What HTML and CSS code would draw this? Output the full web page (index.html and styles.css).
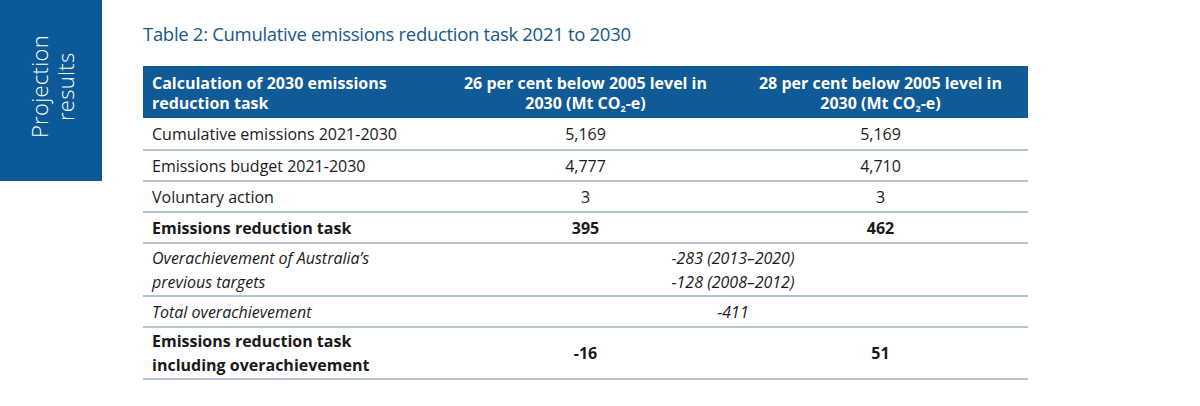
FILE: index.html
```html
<!DOCTYPE html>
<html>
<head>
<meta charset="utf-8">
<link rel="stylesheet" href="styles.css">
</head>
<body>
<div class="page">
  <aside class="tab"><div class="tab-text">Projection<br>results</div></aside>
  <main class="content">
    <h1 class="title">Table 2: Cumulative emissions reduction task 2021 to 2030</h1>
    <table class="data">
      <colgroup><col class="c1"><col class="c2"><col class="c3"></colgroup>
      <thead>
        <tr>
          <th class="first">Calculation of 2030 emissions<br>reduction task</th>
          <th>26 per cent below 2005 level in<br>2030 (Mt CO<sub>2</sub>-e)</th>
          <th>28 per cent below 2005 level in<br>2030 (Mt CO<sub>2</sub>-e)</th>
        </tr>
      </thead>
      <tbody>
        <tr><td>Cumulative emissions 2021-2030</td><td class="num">5,169</td><td class="num">5,169</td></tr>
        <tr><td>Emissions budget 2021-2030</td><td class="num">4,777</td><td class="num">4,710</td></tr>
        <tr><td>Voluntary action</td><td class="num">3</td><td class="num">3</td></tr>
        <tr class="bold"><td>Emissions reduction task</td><td class="num">395</td><td class="num">462</td></tr>
        <tr class="ital tall"><td>Overachievement of Australia’s<br>previous targets</td><td class="num" colspan="2">-283 (2013–2020)<br>-128 (2008–2012)</td></tr>
        <tr class="ital"><td>Total overachievement</td><td class="num" colspan="2">-411</td></tr>
        <tr class="bold tall"><td>Emissions reduction task<br>including overachievement</td><td class="num">-16</td><td class="num">51</td></tr>
      </tbody>
    </table>
  </main>
</div>
</body>
</html>
```

FILE: styles.css
```css
* { box-sizing: border-box; }
html, body { margin: 0; padding: 0; background: #fff; }
body { font-family: "Open Sans", "Noto Sans", sans-serif; color: #1a1a1a; }
.page { display: flex; align-items: flex-start; width: 1200px; height: 406px; }
.tab {
  width: 102px; height: 181px; background: #0b5996;
  display: flex; align-items: center; justify-content: center;
  padding-bottom: 8px; padding-left: 2px;
}
.tab-text {
  writing-mode: vertical-rl; transform: rotate(180deg);
  color: #fff; font-weight: 300; font-size: 22px; line-height: 26px;
  text-align: center; letter-spacing: 0.3px;
}
.content { padding-left: 41px; padding-top: 21px; }
.title {
  margin: 0; font-weight: 400; font-size: 18.5px; line-height: 26px;
  color: #16588c; letter-spacing: -0.3px;
}
.data {
  margin-top: 19px; width: 885px; border-collapse: collapse; table-layout: fixed;
  font-size: 16px; letter-spacing: 0;
}
.data col.c1, .data col.c2, .data col.c3 { width: 295px; }
.data th {
  background: #0f5a97; color: #fff; font-weight: 700; font-size: 16px;
  line-height: 20px; height: 52px; padding: 4px 9px 2px; text-align: center;
  vertical-align: middle;
}
.data th.first { text-align: left; }
.data sub { font-size: 9px; vertical-align: -3px; line-height: 0; }
.data td {
  border-bottom: 2px solid #b5c3d0; height: 31px; padding: 0 9px;
  line-height: 22px; vertical-align: middle;
}
.data tbody tr:first-child td { height: 32px; }
.data tr.tall td { height: 52px; line-height: 24px; }
.data tr.tall.ital td { height: 53px; }
.data td.num { text-align: center; }
.bold td { font-weight: 700; }
.ital td { font-style: italic; }
```
